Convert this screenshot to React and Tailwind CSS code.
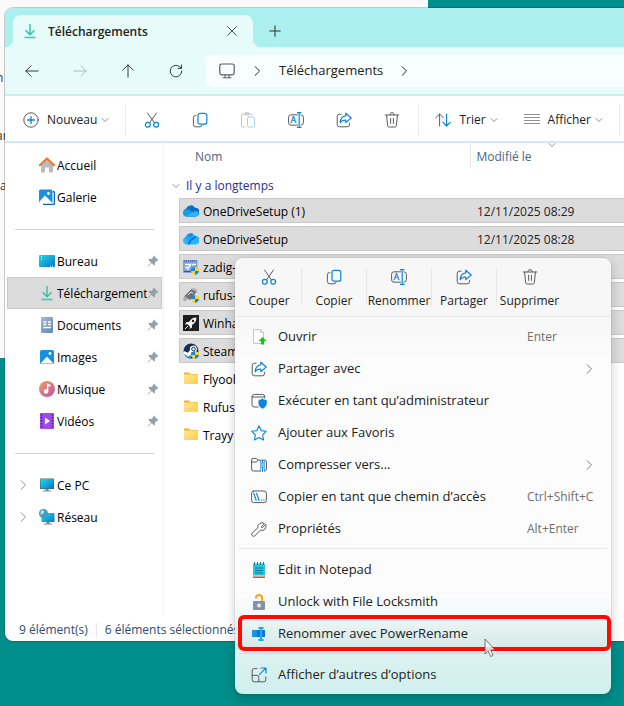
import { useState } from "react";

/* ---------- Line icons ---------- */

const Line = ({ size = "size-4", color = "#5c5c5c", children }) => (
  <svg
    viewBox="0 0 16 16"
    className={`${size} shrink-0`}
    fill="none"
    stroke={color}
    strokeWidth="1"
    strokeLinecap="round"
    strokeLinejoin="round"
    aria-hidden="true"
  >
    {children}
  </svg>
);

const BLUE = "#0a84dc";

const CutIcon = () => (
  <Line>
    <path d="M3.5 1 10.4 10.8M12.5 1 5.6 10.8" />
    <circle cx="3.8" cy="12.8" r="2.4" stroke={BLUE} strokeWidth="1.2" />
    <circle cx="12.2" cy="12.8" r="2.4" stroke={BLUE} strokeWidth="1.2" />
  </Line>
);

const CopyIcon = () => (
  <Line>
    <path d="M4 3.6H3.4A2 2 0 0 0 1.4 5.6v6.8a2.4 2.4 0 0 0 2.4 2.4H8a2 2 0 0 0 2-1.6" />
    <rect x="6" y="1.4" width="8.8" height="10.8" rx="2" stroke={BLUE} strokeWidth="1.2" />
  </Line>
);

const PasteIcon = () => (
  <Line color="#c4c4c4">
    <path d="M5 2H2.5a1 1 0 0 0-1 1v11a1 1 0 0 0 1 1H5M10 2h1.5a1 1 0 0 1 1 1" />
    <rect x="4.5" y=".8" width="5" height="2.2" rx="1" fill="#ddd" />
    <rect x="7.5" y="5" width="7" height="10" rx="1.2" stroke="#a9d3ef" />
  </Line>
);

const RenameIcon = () => (
  <Line>
    <path d="M9.5 2.8H3A2.4 2.4 0 0 0 .6 5.2v5.6A2.4 2.4 0 0 0 3 13.2h6.5M13 2.8a2.4 2.4 0 0 1 2.4 2.4v5.6a2.4 2.4 0 0 1-2.4 2.4" />
    <path d="M11.2.8v14.4M9.4.6h3.6M9.4 15.4h3.6" stroke={BLUE} strokeWidth="1.2" />
    <text x="2.4" y="11.2" fontSize="9" fontFamily="Open Sans, sans-serif" fill={BLUE} stroke={BLUE} strokeWidth=".3">
      A
    </text>
  </Line>
);

const ShareIcon = () => (
  <Line>
    <path d="M5.2 2.2H3.6A2.4 2.4 0 0 0 1.2 4.6v7.8a2.4 2.4 0 0 0 2.4 2.4h7.6a2.4 2.4 0 0 0 2.4-2.4v-1.2" />
    <path d="M9.8 1.2 15.2 6l-5.4 4.6V8.2c-2.6-.2-4.4.6-5.6 2.4.2-3.8 2-6.4 5.6-6.8Z" stroke={BLUE} strokeWidth="1.2" />
  </Line>
);

const TrashIcon = () => (
  <Line>
    <path d="M1.2 3h13.6M5.8 2.8a2.2 2.2 0 0 1 4.4 0M2.6 3.2l1 10.4a1.6 1.6 0 0 0 1.6 1.4h5.6a1.6 1.6 0 0 0 1.6-1.4l1-10.4M6.6 6.4v5M9.4 6.4v5" />
  </Line>
);

const NewIcon = () => (
  <Line>
    <circle cx="8" cy="8" r="7.2" />
    <path d="M8 4.6v6.8M4.6 8h6.8" stroke={BLUE} strokeWidth="1.3" />
  </Line>
);

const SortIcon = () => (
  <Line>
    <path d="M4.6 14V2M.8 5.8 4.6 2l3.6 3.6" />
    <path d="M11.6 2v12M8 10.4l3.6 3.6 3.6-3.6" stroke={BLUE} strokeWidth="1.2" />
  </Line>
);

const ListIcon = () => (
  <Line color="#8f8f8f">
    <path d="M.5 2.5h15M.5 5.5h15M.5 8.5h15M.5 11.5h15" />
  </Line>
);

const MonitorIcon = () => (
  <Line>
    <rect x=".8" y="1" width="14.4" height="10.8" rx="1.8" strokeWidth="1.2" />
    <path d="M6 12v2.6M10 12v2.6M4 14.8h8" />
  </Line>
);

const ChevronDown = () => (
  <Line size="size-2" color="#888">
    <path d="m2 5 6 6 6-6" strokeWidth="1.8" />
  </Line>
);

const ChevronRight = ({ color = "#808080" }) => (
  <Line size="size-2.5" color={color}>
    <path d="m5 1 7 7-7 7" strokeWidth="1.6" />
  </Line>
);

const BackIcon = () => (
  <Line size="size-3.5" color="#333">
    <path d="M15 8H1M7 2 1 8l6 6" strokeWidth="1.1" />
  </Line>
);

const ForwardIcon = () => (
  <Line size="size-3.5" color="#a9b9b8">
    <path d="M1 8h14M9 2l6 6-6 6" strokeWidth="1.1" />
  </Line>
);

const UpIcon = () => (
  <Line size="size-3.5" color="#333">
    <path d="M8 15V1M2 7l6-6 6 6" strokeWidth="1.1" />
  </Line>
);

const RefreshIcon = () => (
  <Line size="size-3.5" color="#333">
    <path d="M14.6 8A6.6 6.6 0 1 1 12.4 3.2L14 4.8M14.2 1v4h-4" strokeWidth="1.1" />
  </Line>
);

const RunAdminIcon = () => (
  <Line>
    <path d="M7 14H3.4A2.4 2.4 0 0 1 1 11.6V3.8A2.4 2.4 0 0 1 3.4 1.4h8a2.4 2.4 0 0 1 2.4 2.4V5M1 4h12.6" />
    <path d="M11.6 6.2c1.2.8 2.2 1 3.6 1v3.6c0 2-1.6 3.6-3.6 4.4-2-.8-3.6-2.4-3.6-4.4V7.2c1.4 0 2.4-.2 3.6-1Z" fill={BLUE} stroke={BLUE} />
  </Line>
);

const StarIcon = () => (
  <Line color={BLUE}>
    <path d="m8 .8 2.2 4.8 5.2.6-3.8 3.6 1 5.2L8 12.4 3.4 15l1-5.2L.6 6.2l5.2-.6Z" strokeWidth="1.1" />
  </Line>
);

const ZipIcon = () => (
  <Line>
    <path d="M9.5 14H2.6a2 2 0 0 1-2-2V3A1.6 1.6 0 0 1 2.2 1.4h3L7.2 3.2h6.4a1.8 1.8 0 0 1 1.8 1.8v7a2 2 0 0 1-2 2M.6 5h4.6l2-1.8" />
    <path d="M11.5 3.5v2M10.5 6h2M12.5 8h-2M10.5 10h2M11.5 10.500v4" stroke={BLUE} strokeWidth="1.2" />
    <path d="M9.500 3.500v10.500M13.500 3.500v10.500" stroke={BLUE} strokeWidth=".6" />
  </Line>
);

const PathIcon = () => (
  <Line>
    <rect x=".6" y="2" width="14.8" height="11.6" rx="2.2" />
    <path d="m2.8 4.4 2.4 6.8M5.6 4.4 8 11.2M10.2 11.2h.2M12.8 11.2h.2" stroke={BLUE} strokeWidth="1.2" />
  </Line>
);

const WrenchIcon = () => (
  <Line>
    <path d="M10.4 5.6 13.400 2.4A4.4 4.4 0 0 0 6.8 6.8L1.2 12a1.9 1.9 0 0 0 2.7 2.7l5.5-5.4a4.4 4.4 0 0 0 5.300-6L11.6 6.500Z" />
  </Line>
);

const MoreOptionsIcon = () => (
  <Line>
    <path d="M6 1.6H3.2A2 2 0 0 0 1.2 3.6v9.2a2 2 0 0 0 2 2h9.6a2 2 0 0 0 2-2V10M1.2 8.4H6a1.8 1.8 0 0 1 1.8 1.8v4.4" />
    <path d="m8.6 7.4 6-6M10 1h5v5" stroke={BLUE} strokeWidth="1.2" />
  </Line>
);

/* ---------- Coloured icons ---------- */

const Art = ({ children }) => (
  <svg viewBox="0 0 16 16" className="size-4 shrink-0" aria-hidden="true">
    {children}
  </svg>
);

const OpenIcon = () => (
  <Art>
    <path d="M2.5.5h7l3 3v11h-10Z" fill="#fdfdfd" stroke="#c6c6c6" />
    <path d="M9.5.5v3h3" fill="none" stroke="#c6c6c6" />
    <path d="m11.5 8 4 4H13v3.500h-3V12H7.500Z" fill="#10c810" />
  </Art>
);

const NotepadIcon = () => (
  <Art>
    <rect x="2" y="1.5" width="12" height="13.5" rx="1" fill="#2cc3de" />
    <path d="M2 14h12v2H2Z" fill="#b8652a" />
    <path d="M2 13.5h12v1H2Z" fill="#e9eef0" />
    <path d="M3.5 0v3M6.5 0v3M9.5 0v3M12.5 0v3" stroke="#0b7fa5" strokeWidth="1" />
    <path d="M4 6h8M4 8.5h8M4 11h8" stroke="#0a7c9d" strokeWidth="1.2" />
  </Art>
);

const LockIcon = () => (
  <Art>
    <path d="M5 4.5V4a3 3 0 0 1 6 0v3" fill="none" stroke="#f9a41a" strokeWidth="2" />
    <rect x="2" y="7" width="12" height="9" rx="1" fill="#8792a0" />
    <circle cx="8" cy="11.5" r="2" fill="#dce9f5" />
  </Art>
);

const PowerRenameIcon = () => (
  <Art>
    <rect x="1" y="4" width="13" height="7" fill="#0a78d4" />
    <rect x="1" y="4" width="5" height="7" fill="#1c93ea" />
    <path d="M7.5 2h5M7.5 14h5" stroke="#17a5ee" strokeWidth="2" />
    <path d="M10 1.5V14" stroke="#22aef0" strokeWidth="2" />
  </Art>
);

const HomeIcon = () => (
  <Art>
    <path d="M2 7 8 2l6 5v7.5a1 1 0 0 1-1 1h-3v-5H6v5H3a1 1 0 0 1-1-1Z" fill="#b9bcc0" />
    <path d="M.8 8.2 8 1.5l7.2 6.7" fill="none" stroke="#f0732a" strokeWidth="2" strokeLinecap="round" strokeLinejoin="round" />
  </Art>
);

const GalleryIcon = () => (
  <Art>
    <path d="M14 2.5A1.5 1.5 0 0 1 15.500 4v10a1.5 1.5 0 0 1-1.5 1.500H4" fill="none" stroke="#0c63b8" strokeWidth="1.5" />
    <rect x="0" y=".5" width="13.5" height="13.5" rx="1.5" fill="#1a90e0" />
    <path d="m0 13 6-6.500 7 7-.5.500H1Z" fill="#fff" />
    <circle cx="9.5" cy="4.5" r="1.4" fill="#fff" />
  </Art>
);

const DesktopIcon = () => (
  <Art>
    <defs>
      <linearGradient id="desk" x1="0" y1="0" x2="1" y2="1">
        <stop stopColor="#22dbe8" />
        <stop offset="1" stopColor="#0875c8" />
      </linearGradient>
    </defs>
    <rect x="0" y="2" width="16" height="12" rx="1" fill="url(#desk)" />
    <path d="M2 4h1M2 6.5h1" stroke="#fff" strokeWidth="1.2" />
    <path d="M11 13h1M13 13h1" stroke="#fff" />
  </Art>
);

const DownloadIcon = () => (
  <svg viewBox="0 0 16 16" className="size-4 shrink-0" fill="none" stroke="#2fc2a4" strokeWidth="1.4" aria-hidden="true">
    <path d="M8 1v10.5M3.5 7.2 8 11.700l4.500-4.500" />
    <path d="M2.5 14.5h11" stroke="#35cfae" strokeWidth="1.6" />
  </svg>
);

const DocumentsIcon = () => (
  <Art>
    <defs>
      <linearGradient id="doc" x1="0" y1="0" x2="1" y2="1">
        <stop stopColor="#a3bdd6" />
        <stop offset="1" stopColor="#5f86b2" />
      </linearGradient>
    </defs>
    <rect x="2" y="0" width="12" height="16" rx="1" fill="url(#doc)" />
    <path d="M4.500 5h3M4.500 7.500h3M9 5h3M9 7.500h3M4.500 10.500h7.500" stroke="#fff" strokeWidth="1.4" />
  </Art>
);

const PicturesIcon = () => (
  <Art>
    <rect x="1" y="1" width="14" height="14" rx="1.5" fill="#1590e2" />
    <path d="m1.5 14.5 6.500-7 6.500 7Z" fill="#fff" />
    <circle cx="11" cy="4.5" r="1.4" fill="#fff" />
  </Art>
);

const MusicIcon = () => (
  <Art>
    <defs>
      <linearGradient id="music" x1="0" y1="0" x2="1" y2="1">
        <stop stopColor="#f59a5c" />
        <stop offset="1" stopColor="#b757ac" />
      </linearGradient>
    </defs>
    <circle cx="8" cy="8" r="8" fill="url(#music)" />
    <circle cx="7" cy="10.5" r="2.2" fill="#fff" />
    <path d="M8.600 10.500V3.500l3 1.500" fill="none" stroke="#fff" strokeWidth="1.4" />
  </Art>
);

const VideoIcon = () => (
  <Art>
    <rect x="1" y="0" width="14" height="16" rx="1" fill="#a04be8" />
    <path d="M2.500 1v15M13.500 1v15" stroke="#52209c" strokeWidth="1.6" strokeDasharray="1.6 1.4" />
    <path d="m6 4.500 5 3.500-5 3.500Z" fill="#fff" />
  </Art>
);

const ComputerIcon = () => (
  <Art>
    <rect x="1" y="1.5" width="14" height="10.5" rx=".6" fill="#555d66" />
    <rect x="1.5" y="2" width="13" height="9.5" fill="url(#desk)" />
    <path d="M6.500 12h3v1.500h-3ZM4 13.500h8v1H4Z" fill="#7f8a94" />
  </Art>
);

const NetworkIcon = () => (
  <Art>
    <rect x="2.5" y="4" width="13" height="9" fill="url(#desk)" />
    <path d="M7.500 13h3v1.500h-3ZM5 14.500h8v1H5Z" fill="#7f8a94" />
    <circle cx="4.5" cy="4.5" r="4.5" fill="#3f9cc4" />
    <path d="M2 2c2-1 4 0 3 1.500S3 5 1.500 6Z" fill="#bfe3ef" />
  </Art>
);

const PinIcon = () => (
  <svg viewBox="0 0 12 12" className="size-3 shrink-0" aria-hidden="true">
    <path d="M6.800.6 11.400 5.200 10.600 6l-.8-.2-1.800 1.800.2 2L7.200 10.600 4.600 8 1 11.400H.6V11L4 7.400 1.400 4.800 2.400 3.800l2 .2 1.800-1.800L6 1.400Z" fill="#93a1a9" />
  </svg>
);

const CloudIcon = () => (
  <Art>
    <path d="M4 13.500a4 4 0 0 1-1-7.800 5 5 0 0 1 9-.9 4.200 4.200 0 0 1 1 8.700Z" fill="#0a6fc9" />
    <path d="M3.500 13.500A3.500 3.500 0 0 1 .6 8C3 5.500 6 6 8 8l5 5.500Z" fill="#1b9ae8" />
    <path d="M3 13.300 9 9.500c2-1.300 5-2 6.300 0 .8 2-.6 4-2.300 4H4Z" fill="#2cb6f5" />
  </Art>
);

const CloudNewIcon = () => (
  <Art>
    <defs>
      <linearGradient id="cloud" x1="1" y1="0" x2="0" y2="1">
        <stop stopColor="#0a7cf0" />
        <stop offset="1" stopColor="#38ccfb" />
      </linearGradient>
    </defs>
    <path d="M4 13.500a4 4 0 0 1-1-7.800 5 5 0 0 1 9-.9 4.200 4.200 0 0 1 1 8.700Z" fill="#29b6f8" />
    <path d="M4 13.500a4 4 0 0 1-1-7.800C4 3 7 1.500 9.500 2.700 10 6.500 4 7.500 4 13.500Z" fill="url(#cloud)" />
    <path d="M5 13.500C4.500 9 9.500 7 12 4.800c1 .8 1 1.400 1 1.400C11 9 7 9.500 7 13.500Z" fill="#1270e6" />
  </Art>
);

// small blue/yellow shield drawn over executables
const Shield = () => (
  <g>
    <path d="M8 9.500 12 8v4H8Z" fill="#1985dc" />
    <path d="M12 8l4 1.500V12h-4Z" fill="#ffd21f" />
    <path d="M8 12h4v4c-2-.6-4-2-4-4Z" fill="#ffd21f" />
    <path d="M12 12h4c0 2-2 3.400-4 4Z" fill="#1985dc" />
  </g>
);

const ZadigIcon = () => (
  <Art>
    <rect x="0" y="1" width="14.5" height="13" rx="1" fill="#7da2dc" />
    <path d="M1 2h12.500" stroke="#3b66b0" strokeWidth="1.5" strokeDasharray="1 1" />
    <path d="M2 5.500h5.500L4.500 11M9 5.500h4M2 8.500h3" fill="none" stroke="#fff" strokeWidth="1.5" />
    <path d="M1 12.500h8" stroke="#36559a" />
    <Shield />
  </Art>
);

const RufusIcon = () => (
  <Art>
    <path d="M1 9.500 9 1.500l5 3-7 8.500Z" fill="#6e7276" />
    <path d="m8 2 3-1.500L14.500 3 14 5Z" fill="#b5babd" />
    <path d="m2 9 3 2.500-2 2.500H.8L0 12Z" fill="#a5abb0" />
    <path d="m5 8 3-3 2 1.500" fill="none" stroke="#e5e8ea" />
    <Shield />
  </Art>
);

const RocketIcon = () => (
  <Art>
    <rect width="16" height="16" fill="#1d1d1d" />
    <path d="M13.500 2.500c-4 0-6 2-7.500 4.500H3.500L2 9.500l2.500-.2L7 11.800 6.500 14 9 12.500V10c2.500-1.500 4.500-3.500 4.500-7.500Z" fill="#f2f2f2" />
    <circle cx="10" cy="6" r="1.2" fill="#1d1d1d" />
    <path d="m2 14 3-3" stroke="#f2f2f2" />
  </Art>
);

const SteamIcon = () => (
  <Art>
    <circle cx="8" cy="8" r="7.5" fill="#12305e" />
    <path d="M1 10.500A7.500 7.500 0 0 0 8 15.500V11Z" fill="#2a8ccc" />
    <path d="m.8 8 4.200 1.800L7 7a3.500 3.500 0 1 1 4 2.500L7.500 12A2.500 2.500 0 0 1 3 12L.6 11Z" fill="#fff" />
    <circle cx="10.500" cy="6" r="1.800" fill="#fff" stroke="#12305e" />
    <Shield />
  </Art>
);

const FolderIcon = () => (
  <Art>
    <defs>
      <linearGradient id="folder" x1="0" y1="0" x2="1" y2="1">
        <stop stopColor="#ffe79a" />
        <stop offset="1" stopColor="#ffcf3d" />
      </linearGradient>
    </defs>
    <path d="M1 1.500h5L7.500 3H15v3H1Z" fill="#f3b41c" />
    <rect x="1" y="3.5" width="14" height="9.5" rx=".8" fill="url(#folder)" />
  </Art>
);

/* ---------- Data ---------- */

const TOOLS = [
  { label: "Couper", icon: CutIcon },
  { label: "Copier", icon: CopyIcon },
  { label: "Coller", icon: PasteIcon },
  { label: "Renommer", icon: RenameIcon },
  { label: "Partager", icon: ShareIcon },
  { label: "Supprimer", icon: TrashIcon },
];

const PINNED = [
  { label: "Bureau", icon: DesktopIcon },
  { label: "Téléchargements", icon: DownloadIcon, active: true },
  { label: "Documents", icon: DocumentsIcon },
  { label: "Images", icon: PicturesIcon },
  { label: "Musique", icon: MusicIcon },
  { label: "Vidéos", icon: VideoIcon },
];

const FILES = [
  { name: "OneDriveSetup (1)", date: "12/11/2025 08:29", icon: CloudIcon, selected: true },
  { name: "OneDriveSetup", date: "12/11/2025 08:28", icon: CloudNewIcon, selected: true },
  { name: "zadig-", icon: ZadigIcon, selected: true },
  { name: "rufus-", icon: RufusIcon, selected: true },
  { name: "Winha", icon: RocketIcon, selected: true },
  { name: "Steam", icon: SteamIcon, selected: true },
  { name: "Flyoob", icon: FolderIcon },
  { name: "Rufus", icon: FolderIcon },
  { name: "Trayy", icon: FolderIcon },
];

const QUICK = TOOLS.filter((tool) => tool.label !== "Coller");

const ACTIONS = [
  { label: "Ouvrir", icon: OpenIcon, shortcut: "Enter" },
  { label: "Partager avec", icon: ShareIcon, submenu: true },
  { label: "Exécuter en tant qu’administrateur", icon: RunAdminIcon },
  { label: "Ajouter aux Favoris", icon: StarIcon },
  { label: "Compresser vers...", icon: ZipIcon, submenu: true },
  { label: "Copier en tant que chemin d’accès", icon: PathIcon, shortcut: "Ctrl+Shift+C" },
  { label: "Propriétés", icon: WrenchIcon, shortcut: "Alt+Enter" },
];

const EXTENSIONS = [
  { label: "Edit in Notepad", icon: NotepadIcon },
  { label: "Unlock with File Locksmith", icon: LockIcon },
  { label: "Renommer avec PowerRename", icon: PowerRenameIcon, highlight: true },
];

/* ---------- Explorer ---------- */

const TitleBar = () => (
  <div className="flex h-[39px] items-end bg-[#abf0ee] pl-2">
    <div className="relative flex h-8 w-60 items-center rounded-t-lg bg-[#e6fbfa] pr-3 pl-[9px]">
      <span className="absolute bottom-0 -left-2 size-2 rounded-br-lg shadow-[4px_4px_0_#e6fbfa]" />
      <span className="absolute -right-2 bottom-0 size-2 rounded-bl-lg shadow-[-4px_4px_0_#e6fbfa]" />
      <DownloadIcon />
      <span className="ml-[10px] flex-1 pt-0.5 text-[12px] font-semibold text-[#222]">Téléchargements</span>
      <button type="button" aria-label="Fermer l’onglet" className="p-1">
        <Line size="size-2.5" color="#333">
          <path d="m1 1 14 14M15 1 1 15" strokeWidth="1.4" />
        </Line>
      </button>
    </div>
    <button type="button" aria-label="Nouvel onglet" className="mb-2 ml-3.5 p-0.5">
      <Line size="size-3" color="#333">
        <path d="M8 1v14M1 8h14" strokeWidth="1.4" />
      </Line>
    </button>
  </div>
);

const NavBar = () => (
  <div className="flex h-[49px] items-center border-b-2 border-[#c9efed] bg-[#e6fbfa] pl-[3px]">
    <button type="button" aria-label="Précédent" className="flex w-12 justify-center"><BackIcon /></button>
    <button type="button" aria-label="Suivant" className="flex w-12 justify-center" disabled><ForwardIcon /></button>
    <button type="button" aria-label="Dossier parent" className="flex w-12 justify-center"><UpIcon /></button>
    <button type="button" aria-label="Actualiser" className="flex w-12 justify-center"><RefreshIcon /></button>
    <div className="ml-1.5 flex h-8 flex-1 items-center rounded-l-md bg-[#f8fefe] pl-[13px]">
      <MonitorIcon />
      <span className="ml-[17px]"><ChevronRight color="#222" /></span>
      <button type="button" className="mr-4 ml-[17px] text-[13px] text-[#222]">Téléchargements</button>
      <ChevronRight color="#222" />
    </div>
  </div>
);

const Toolbar = () => (
  <div className="flex h-[47px] items-center border-b-2 border-[#cfeeeb] bg-white pt-0.5 text-[12px] text-[#222]">
    <button type="button" className="ml-[18px] flex items-center gap-2">
      <NewIcon />
      Nouveau
      <span className="-ml-1"><ChevronDown /></span>
    </button>
    <span className="ml-4 h-8 w-px bg-[#ebebeb]" />
    <div className="ml-0.5 flex">
      {TOOLS.map(({ label, icon: Icon }) => (
        <button key={label} type="button" aria-label={label} className="flex w-12 justify-center">
          <Icon />
        </button>
      ))}
    </div>
    <span className="ml-0.5 h-8 w-px bg-[#ebebeb]" />
    <button type="button" className="ml-4 flex items-center gap-2">
      <SortIcon />
      Trier
      <span className="-ml-1"><ChevronDown /></span>
    </button>
    <button type="button" className="ml-[26px] flex items-center gap-2">
      <ListIcon />
      Afficher
      <span className="-ml-1"><ChevronDown /></span>
    </button>
    <span className="ml-4 h-8 w-px bg-[#ebebeb]" />
  </div>
);

const SideItem = ({ label, icon: Icon, active, pinned, expandable }) => (
  <a
    href="#"
    className={`ml-0.5 flex h-8 items-center border ${
      active ? "border-[#c9c9c9] bg-[#dcdcdc]" : "border-transparent"
    }`}
  >
    <span className="mr-px flex w-[30px] justify-center">
      {expandable && <ChevronRight color="#888" />}
    </span>
    <Icon />
    <span className="ml-0.5 min-w-0 flex-1 overflow-hidden pt-0.5 whitespace-nowrap">{label}</span>
    {pinned && <span className="mr-0.5"><PinIcon /></span>}
  </a>
);

const Sidebar = () => (
  <nav className="w-[159px] shrink-0 border-r-2 border-[#f7f7f7] pt-1.5 text-[12px] text-black">
    <SideItem label="Accueil" icon={HomeIcon} />
    <SideItem label="Galerie" icon={GalleryIcon} />
    <div className="flex h-8 items-center pr-2 pl-2.5">
      <hr className="w-full border-[#d4d4d4]" />
    </div>
    {PINNED.map((item) => (
      <SideItem key={item.label} {...item} pinned />
    ))}
    <div className="flex h-8 items-center pr-2 pl-2.5">
      <hr className="w-full border-[#d4d4d4]" />
    </div>
    <SideItem label="Ce PC" icon={ComputerIcon} expandable />
    <SideItem label="Réseau" icon={NetworkIcon} expandable />
  </nav>
);

const FileTable = () => (
  <table className="w-full table-fixed text-left text-[12px] text-black">
    <thead>
      <tr className="h-[25px] text-[#4b6584]">
        <th className="w-[300px] p-0 pt-0.5 pl-[25px] font-normal">Nom</th>
        <th className="relative border-l border-[#e6e6e6] p-0 pt-0.5 pl-1.5 font-normal">
          Modifié le
          <span className="absolute -top-0.5 left-[77px]"><ChevronDown /></span>
        </th>
      </tr>
    </thead>
    <tbody>
      <tr className="h-[30px]">
        <th colSpan="2" className="p-0 pt-1.5 font-normal text-[#1f2f8f]">
          <button type="button" className="flex items-center gap-1.5 pl-0.5">
            <ChevronDown />
            Il y a longtemps
          </button>
        </th>
      </tr>
      {FILES.map(({ name, date, icon: Icon, selected }) => (
        <tr key={name} className="h-7 align-top">
          <td className="p-0 pl-[9px]">
            <div
              className={`flex h-[25px] items-center gap-1 border-y border-l pl-[3px] ${
                selected ? "border-[#c9c9c9] bg-[#dcdcdc]" : "border-transparent"
              }`}
            >
              <Icon />
              <span className="pt-0.5">{name}</span>
            </div>
          </td>
          <td className="p-0">
            <div
              className={`flex h-[25px] items-center border-y pl-[7px] text-[#222] ${
                selected ? "border-[#c9c9c9] bg-[#dcdcdc]" : "border-transparent"
              }`}
            >
              <span className="pt-0.5">{date}</span>
            </div>
          </td>
        </tr>
      ))}
    </tbody>
  </table>
);

const Explorer = () => (
  <main className="relative mt-2 ml-[5px] overflow-hidden rounded-l-lg bg-white ring-1 ring-black/20">
    <TitleBar />
    <NavBar />
    <Toolbar />
    <div className="flex min-h-[473px]">
      <Sidebar />
      <div className="min-w-0 flex-1 pl-[6px]">
        <FileTable />
      </div>
    </div>
    <footer className="flex h-[25px] items-center pt-0.5 pl-3.5 text-[12px] text-[#2b4d73]">
      <span>9 élément(s)</span>
      <span className="mx-2 h-3.5 w-px bg-[#e6e6e6]" />
      <span>6 éléments sélectionnés</span>
    </footer>
  </main>
);

/* ---------- Context menu ---------- */

const MenuItem = ({ label, icon: Icon, shortcut, submenu, highlight }) => (
  <button
    type="button"
    role="menuitem"
    className={`relative flex h-8 w-full items-center pl-4 text-left text-[13px] text-[#222] ${
      highlight ? "bg-linear-to-b from-[#eef6f6] to-[#d3e8e7]" : ""
    }`}
  >
    <Icon />
    <span className="ml-[11px] flex-1 whitespace-nowrap">{label}</span>
    {shortcut && <span className="w-[84px] text-[12px] whitespace-nowrap text-[#6f6f6f]">{shortcut}</span>}
    {submenu && <span className="mr-[17px]"><ChevronRight /></span>}
    {highlight && (
      <span className="absolute -top-[3px] right-0 -bottom-px left-[3px] rounded-md border-4 border-[#ff0a00]" />
    )}
  </button>
);

const ContextMenu = () => (
  <div
    role="menu"
    className="absolute top-[258px] left-[235px] w-[376px] rounded-lg bg-[linear-gradient(#f7f7f7_0%,#f7f7f7_14%,#fcfcfc_24%,#fcfcfc_77%,#d8f1f0_93%,#d1f0ee_100%)] pb-[3px] shadow-[0_4px_12px_rgba(0,0,0,0.2)] ring-1 ring-black/5"
  >
    <div className="flex h-[59px] items-start border-b border-[#e6e6e6] pt-[11px] pl-0.5">
      {QUICK.map(({ label, icon: Icon }) => (
        <button
          key={label}
          type="button"
          role="menuitem"
          className="flex h-9 w-[65px] flex-col items-center gap-2 border-r border-[#e6e6e6] text-[12px] leading-4 text-[#222] last:border-0"
        >
          <Icon />
          {label}
        </button>
      ))}
    </div>
    <div className="pt-1">
      {ACTIONS.map((item) => (
        <MenuItem key={item.label} {...item} />
      ))}
    </div>
    <hr className="mx-1 mt-[3px] mb-[5px] border-[#e8e8e8]" />
    {EXTENSIONS.map((item) => (
      <MenuItem key={item.label} {...item} />
    ))}
    <hr className="mx-1 mt-[3px] mb-[5px] border-[#c5dfdd]" />
    <MenuItem label="Afficher d’autres d’options" icon={MoreOptionsIcon} />
  </div>
);

const Cursor = () => (
  <svg viewBox="0 0 12 20" className="pointer-events-none absolute top-[638px] left-[484px] h-5 w-3" aria-hidden="true">
    <path d="M1 1v15l3.200-3 2.400 5.500 2.400-1L6.800 12H11Z" fill="#fff" fillOpacity=".8" stroke="#555" strokeWidth=".8" />
  </svg>
);

const App = () => {
  const [menuOpen] = useState(true);

  return (
    <div className="relative min-h-screen overflow-hidden bg-[#008e8a] font-['Open_Sans','Noto_Sans',sans-serif]">

      {/* Window behind the explorer */}
      <div className="absolute top-0 left-0 h-[358px] w-[428px] bg-[#fafafa] text-[12px] leading-4 text-[#333]">
        <p className="-ml-1 pt-[70px]">n</p>
        <p className="-ml-1 pt-[42px]">ar</p>
        <p className="pt-[34px]">a</p>
      </div>

      <Explorer />

      {menuOpen && <ContextMenu />}
      <Cursor />

    </div>
  );
};

export default App;
